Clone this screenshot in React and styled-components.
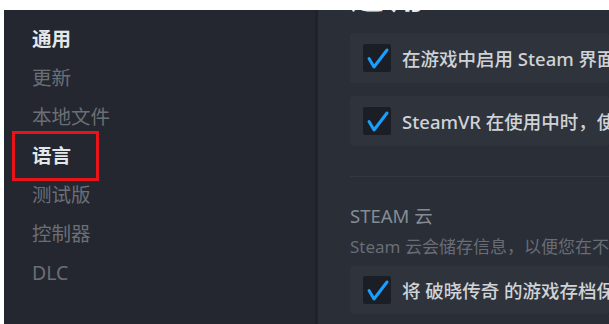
import React from "react";
import styled, { createGlobalStyle } from "styled-components";

const GlobalStyle = createGlobalStyle`
  html, body {
    margin: 0;
    padding: 0;
    background: #ffffff;
  }
  body {
    font-family: "Noto Sans", "Noto Sans CJK SC", sans-serif;
  }
`;

const navItems = [
  { label: "通用", active: true },
  { label: "更新" },
  { label: "本地文件" },
  { label: "语言", active: true, marked: true },
  { label: "测试版" },
  { label: "控制器" },
  { label: "DLC" },
];

const CheckIcon = () => (
  <svg width="28" height="28" viewBox="0 0 28 28">
    <path
      d="M6 14.5 L11 23 L24 6"
      fill="none"
      stroke="#1a9fff"
      strokeWidth="3"
      strokeLinecap="round"
      strokeLinejoin="round"
    />
  </svg>
);

const App = () => {
  return (
    <>
      <GlobalStyle />
      <Window>
        <Sidebar>
          {navItems.map((item) => (
            <NavItem key={item.label} active={item.active} marked={item.marked}>
              {item.label}
            </NavItem>
          ))}
        </Sidebar>
        <Panel>
          <Heading>通用</Heading>
          <OptionRow gap="20px">
            <Box>
              <CheckIcon />
            </Box>
            <OptionText>在游戏中启用 Steam 界面</OptionText>
          </OptionRow>
          <OptionRow gap="13px">
            <Box>
              <CheckIcon />
            </Box>
            <OptionText>SteamVR 在使用中时，使用桌面游戏剧场</OptionText>
          </OptionRow>
          <Divider />
          <SectionTitle>STEAM 云</SectionTitle>
          <SectionDesc>Steam 云会储存信息，以便您在不同的电脑上继续游戏。</SectionDesc>
          <OptionRow gap="8px" short>
            <Box>
              <CheckIcon />
            </Box>
            <OptionText>将 破晓传奇 的游戏存档保存在 Steam 云中</OptionText>
          </OptionRow>
        </Panel>
      </Window>
    </>
  );
};

const Window = styled.div`
  display: flex;
  margin: 10px 0 0 4px;
  height: 314px;
  overflow: hidden;
`;

const Sidebar = styled.div`
  width: 314px;
  flex-shrink: 0;
  background: #24272f;
  border-right: 3px solid #1f2228;
  padding: 9px 0 0 28px;
  box-sizing: border-box;
  display: flex;
  flex-direction: column;
`;

const NavItem = styled.div`
  position: relative;
  align-self: flex-start;
  height: 39px;
  line-height: 39px;
  font-size: 19.5px;
  font-weight: ${(p) => (p.active ? 700 : 400)};
  color: ${(p) => (p.active ? "#e4e7ea" : "#6a6f77")};
  white-space: nowrap;

  ${(p) =>
    p.marked &&
    `
    &::after {
      content: "";
      position: absolute;
      left: -20px;
      top: -5px;
      width: 81px;
      height: 44px;
      border: 3px solid #e8141a;
    }
  `}
`;

const Panel = styled.div`
  flex: 1;
  min-width: 0;
  background: #2a2e37;
  padding-left: 32px;
  overflow: hidden;
  display: flex;
  flex-direction: column;
`;

const Heading = styled.div`
  margin-top: -31px;
  height: 34px;
  font-size: 34px;
  line-height: 34px;
  font-weight: 700;
  letter-spacing: 6px;
  color: #e9ecef;
  white-space: nowrap;
  flex-shrink: 0;
`;

const OptionRow = styled.div`
  display: flex;
  align-items: center;
  gap: 11px;
  height: ${(p) => (p.short ? "48px" : "50px")};
  padding-left: 13px;
  margin-top: ${(p) => p.gap};
  background: #2f333c;
  border-radius: 3px;
  white-space: nowrap;
  flex-shrink: 0;
`;

const Box = styled.div`
  width: 28px;
  height: 28px;
  flex-shrink: 0;
  background: #1b1e24;
  border-radius: 2px;
  display: flex;
`;

const OptionText = styled.span`
  font-size: 18.5px;
  font-weight: 500;
  color: #cfd3d7;
`;

const Divider = styled.div`
  height: 1px;
  margin-top: 30px;
  background: #343842;
  flex-shrink: 0;
`;

const SectionTitle = styled.div`
  margin-top: 27px;
  font-size: 18.5px;
  line-height: 24px;
  color: #868c94;
  white-space: nowrap;
  flex-shrink: 0;
`;

const SectionDesc = styled.div`
  margin-top: 8px;
  font-size: 17px;
  line-height: 22px;
  color: #686d75;
  white-space: nowrap;
  flex-shrink: 0;
`;

export default App;
